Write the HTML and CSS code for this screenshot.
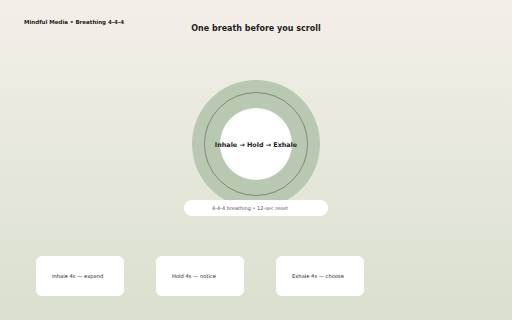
FILE: index.html
```html
<!DOCTYPE html>
<html lang="en">
<head>
    <meta charset="UTF-8">
    <meta name="viewport" content="width=device-width, initial-scale=1.0">
    <title>Mindful Media</title>
    <link rel="stylesheet" href="styles.css">
</head>
<body>

    <header class="top">
        <div class="brand">Mindful Media • Breathing 4-4-4</div>
        <h1 class="title">One breath before you scroll</h1>
    </header>

    <!-- Atemkreis -->
    <main class="breath">
        <div class="circle">
            <div class="ring"></div>
            <div class="core"></div>
            <div class="label">Inhale → Hold → Exhale</div>
        </div>
        <div class="pill">4-4-4 breathing • 12-sec reset</div>
    </main>

    <section class="steps">
        <div class="step">Inhale 4s — expand</div>
        <div class="step">Hold 4s — notice</div>
        <div class="step">Exhale 4s — choose</div>
    </section>

</body>
</html>
```

FILE: styles.css
```css
html, body {
    margin: 0;
    height: 100%;
}

body {
    font-family: 'DejaVu Sans', sans-serif;
    background: linear-gradient(to bottom, #f4efe9, #d9e0cf);
    color: #1e1e1e;
    width: 512px;
    height: 320px;
    overflow: hidden;
}

.top {
    display: grid;
    grid-template-columns: 1fr auto 1fr;
    padding: 18px 24px 0 24px;
}

.brand {
    font-size: 5.5px;
    font-weight: bold;
    line-height: 8px;
    white-space: nowrap;
}

.title {
    margin: 6px 0 0 0;
    font-size: 8px;
    line-height: 10px;
    font-weight: bold;
}

.breath {
    display: flex;
    flex-direction: column;
    align-items: center;
    margin-top: 46px;
}

.circle {
    width: 128px;
    height: 128px;
    border-radius: 50%;
    background-color: #b9c8b1;
    display: grid;
    place-items: center;
}

.circle > * {
    grid-area: 1 / 1;
}

.ring {
    width: 104px;
    height: 104px;
    border-radius: 50%;
    border: 1px solid #7b8b76;
    box-sizing: border-box;
}

.core {
    width: 72px;
    height: 72px;
    border-radius: 50%;
    background-color: #ffffff;
}

.label {
    font-size: 6.4px;
    font-weight: bold;
    white-space: nowrap;
    color: #222;
    padding-top: 2px;
}

.pill {
    margin-top: -8px;
    width: 144px;
    height: 16px;
    line-height: 16px;
    border-radius: 8px;
    background-color: #ffffff;
    font-size: 5px;
    color: #555555;
    text-align: center;
    padding-right: 12px;
    box-sizing: border-box;
}

.steps {
    display: flex;
    gap: 32px;
    padding-left: 36px;
    margin-top: 40px;
}

.step {
    width: 88px;
    height: 40px;
    box-sizing: border-box;
    padding-left: 16px;
    display: flex;
    align-items: center;
    background-color: #ffffff;
    border-radius: 6px;
    font-size: 5.2px;
    color: #2a2a2a;
    white-space: nowrap;
}
```
